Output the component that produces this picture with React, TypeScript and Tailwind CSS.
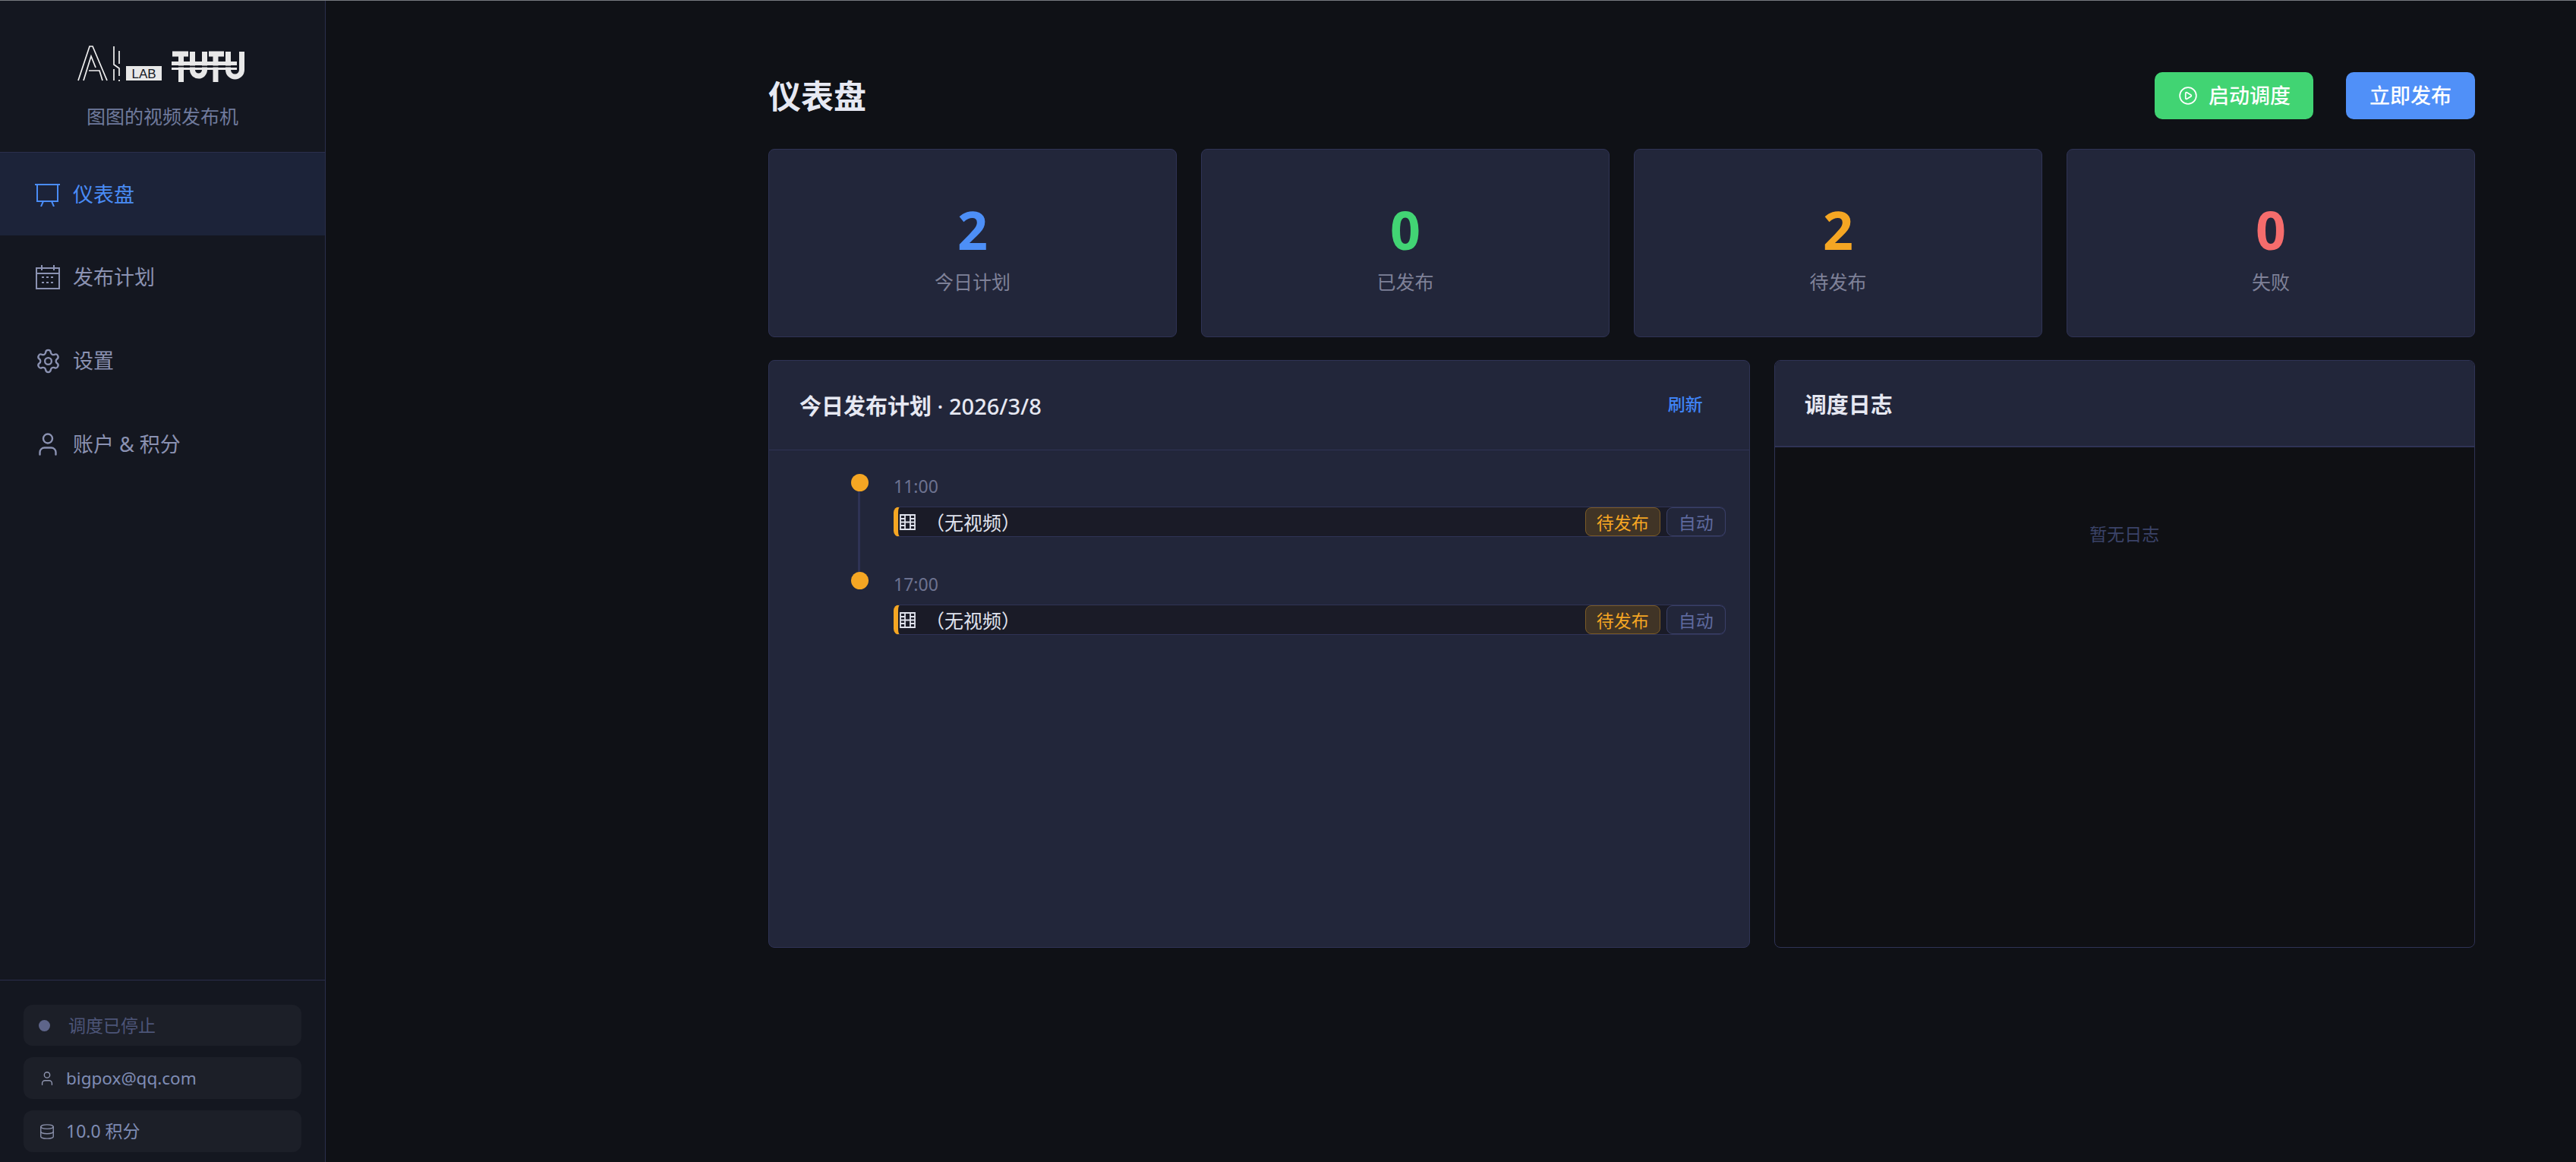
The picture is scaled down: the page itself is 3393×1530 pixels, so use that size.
import { CirclePlay, Database, Settings, User } from "lucide-react";

const fontStack = "font-['Noto_Sans','Noto_Sans_CJK_SC',sans-serif]";

const BoardIcon = () => (
  <svg width="33" height="30" viewBox="0 0 33 30" fill="none" stroke="currentColor" strokeWidth="2">
    <path d="M0 1h33M3 1v22h27V1M11 23l-3 7M22 23l3 7" />
  </svg>
);

const CalendarIcon = () => (
  <svg width="32" height="32" viewBox="0 0 32 32" fill="none" stroke="currentColor" strokeWidth="2">
    <path d="M1 4h30v27H1zM1 11h30M8 0v7M24 0v7" />
    <path d="M8 16h3M14 16h3M20 16h3M8 23h3M14 23h3M20 23h3" />
  </svg>
);

const FilmIcon = () => (
  <svg width="21" height="21" viewBox="0 0 21 21" fill="none" stroke="#dfe2ec" strokeWidth="1.8">
    <path d="M1 1h19v19H1zM7 1v19M14 1v19M7 10.500h7M1 6h6M1 10.500h6M1 15h6M14 6h6M14 10.500h6M14 15h6" />
  </svg>
);

const Logo = () => (
  <svg width="224" height="50" viewBox="102 58 224 50" fill="none" stroke="#f0f0f0">
    <g strokeWidth="1.700">
      <path d="M103 105l15-45h4l19 45" />
      <path d="M110 105l10-32 6 15" />
      <path d="M117 92h14l4 13" />
      <path d="M150 60v24l7 5v10M157 66v17M150 90v15M157 104v2" />
    </g>
    <rect x="166" y="86" width="47" height="19" fill="#e8e8e8" stroke="none" />
    <text x="189.500" y="101.500" textAnchor="middle" fontSize="17" fill="#14171f" stroke="none" fontFamily="Liberation Sans, sans-serif">
      LAB
    </text>
    <g strokeWidth="7" stroke="#e8e8e8">
      <path d="M227 70h21M238.500 70v37M253.500 67v24a8 8 0 0 0 16 0V67" />
      <path d="M275 70h20M284 70v37M300.500 67v24a9 9 0 0 0 18 0V67" />
    </g>
    <path d="M226 82.500h86" stroke="#e8e8e8" strokeWidth="5" />
    <path d="M225 86.500h90" stroke="#14171f" strokeWidth="2" />
    <path d="M226 89.500h86" stroke="#e8e8e8" strokeWidth="3" />
  </svg>
);

const navItems = [
  { label: "发布计划", icon: <CalendarIcon /> },
  { label: "设置", icon: <Settings size={35} strokeWidth={1.6} /> },
  { label: "账户 & 积分", icon: <User size={36} strokeWidth={1.6} /> },
];

const stats = [
  { value: "2", label: "今日计划", color: "text-[#4d8ff7]" },
  { value: "0", label: "已发布", color: "text-[#42d474]" },
  { value: "2", label: "待发布", color: "text-[#f5a623]" },
  { value: "0", label: "失败", color: "text-[#f56c6c]" },
];

const Sidebar = () => (
  <aside className="flex w-[429px] shrink-0 flex-col border-r border-[#2a2e4c] bg-[#141720]">
    <div className="flex h-[199px] flex-col items-center pt-[58px]">
      <Logo />
      <p className="mt-[27px] text-[25px] leading-[34px] text-[#6f7a9c]">图图的视频发布机</p>
    </div>
    <nav className="flex flex-col">
      <a className="flex h-[110px] items-center gap-[17px] border-t border-[#2a2e4c] bg-[#1c2339] pl-[46px] pt-[2px] text-[#4a8cf5]">
        <BoardIcon />
        <span className="text-[27px]">仪表盘</span>
      </a>
      {navItems.map((item) => (
        <a key={item.label} className="flex h-[110px] items-center text-[#8b92b2]">
          <span className="flex w-[96px] justify-center pl-[30px]">{item.icon}</span>
          <span className="text-[27px]">{item.label}</span>
        </a>
      ))}
    </nav>
    <div className="mt-auto flex flex-col gap-[15px] border-t border-[#2a2e4c] px-[31px] pb-[13px] pt-[32px]">
      <div className="flex h-[54px] items-center rounded-xl bg-[#1c1f28] pl-[20px] text-[#4d5578]">
        <span className="h-[15px] w-[15px] rounded-full bg-[#5e658a]" />
        <span className="ml-[24px] text-[23px]">调度已停止</span>
      </div>
      <div className="flex h-[55px] items-center gap-[14px] rounded-xl bg-[#1c1f28] pl-[20px] text-[#7f8cb4]">
        <User size={22} strokeWidth={1.5} className="text-[#9096b0]" />
        <span className="text-[22.500px]">bigpox@qq.com</span>
      </div>
      <div className="flex h-[55px] items-center gap-[14px] rounded-xl bg-[#1c1f28] pl-[20px] text-[#7f8cb4]">
        <Database size={22} strokeWidth={1.5} className="text-[#8a90aa]" />
        <span className="text-[23px]">10.0 积分</span>
      </div>
    </div>
  </aside>
);

const PlanRow = ({ time, last }: { time: string; last?: boolean }) => (
  <div className="flex h-[129px]">
    <div className="flex w-[23px] flex-col items-center">
      <span className="h-[23px] w-[23px] shrink-0 rounded-full bg-[#f5a623]" />
      {!last && <span className="w-[3px] flex-1 -translate-x-px bg-[#2f3355]" />}
    </div>
    <div className="ml-[33px] flex-1">
      <p className="h-[32px] text-[23px] leading-[32px] text-[#6d7290]">{time}</p>
      <div className="mt-[11px] flex h-[40px] items-stretch rounded-lg border border-l-[6px] border-[#2f3355] border-l-[#f5a623] bg-[#1a1b27]">
        <span className="flex items-center pl-[2px]">
          <FilmIcon />
        </span>
        <span className="ml-[13px] flex items-center pt-[3px] text-[25px] text-[#e0e3ee]">（无视频）</span>
        <span className="ml-auto flex items-center rounded-lg border border-[#7b5b26] bg-[#403426] px-[14px] pt-[3px] text-[23px] text-[#f5a623]">
          待发布
        </span>
        <span className="ml-[8px] -mr-px flex items-center rounded-lg border border-[#3a4068] bg-[#22263a] px-[15px] pt-[3px] text-[23px] text-[#5f6a9e]">
          自动
        </span>
      </div>
    </div>
  </div>
);

const App = () => {
  return (
    <div className={`flex h-[1530px] w-[3393px] overflow-hidden border-t border-[#777a80] bg-[#0f1116] ${fontStack}`}>
      <Sidebar />
      <main className="flex-1 pl-[583px] pr-[133px] pt-[94px]">
        <div className="flex h-[62px] items-center justify-between">
          <h1 className="pt-[2px] text-[43px] font-bold leading-[56px] text-[#e6e8f2]">仪表盘</h1>
          <div className="flex gap-[43px]">
            <button className="flex h-[62px] items-center gap-[14px] rounded-[10px] bg-[#41d473] pl-[31px] pr-[30px] text-[27px] font-medium text-white">
              <CirclePlay size={26} strokeWidth={1.6} />
              启动调度
            </button>
            <button className="flex h-[62px] items-center rounded-[10px] bg-[#5090f8] px-[31px] text-[27px] font-medium text-white">
              立即发布
            </button>
          </div>
        </div>

        <div className="mt-[39px] grid grid-cols-4 gap-[32px]">
          {stats.map((stat) => (
            <div
              key={stat.label}
              className="flex h-[248px] flex-col items-center justify-center rounded-lg border border-[#2f3355] bg-[#22263a] pt-[10px]"
            >
              <span className={`text-[70px] font-bold leading-[80px] ${stat.color}`}>{stat.value}</span>
              <span className="mt-[12px] text-[25px] leading-[34px] text-[#7f8198]">{stat.label}</span>
            </div>
          ))}
        </div>

        <div className="mt-[30px] grid h-[774px] grid-cols-[1.4fr_1fr] gap-[32px]">
          <section className="rounded-lg border border-[#2f3355] bg-[#22263a]">
            <header className="flex h-[118px] items-center justify-between border-b border-[#2f3355] pl-[40px] pr-[61px]">
              <h2 className="pt-[2px] text-[29px] font-bold text-[#e6e8f2]">
                今日发布计划 <span className="font-medium">· 2026/3/8</span>
              </h2>
              <button className="-translate-y-px text-[23px] font-medium text-[#3f83f5]">刷新</button>
            </header>
            <div className="pl-[108px] pr-[31px] pt-[31px]">
              <PlanRow time="11:00" />
              <PlanRow time="17:00" last />
            </div>
          </section>
          <section className="flex flex-col overflow-hidden rounded-lg border border-[#2f3355] bg-[#0f1014]">
            <header className="flex h-[114px] items-center border-b-2 border-[#2f3355] bg-[#22263a] pl-[39px] pt-[4px]">
              <h2 className="text-[29px] font-bold text-[#e6e8f2]">调度日志</h2>
            </header>
            <p className="pt-[98px] text-center text-[23px] leading-[32px] text-[#3b4368]">暂无日志</p>
          </section>
        </div>
      </main>
    </div>
  );
};

export default App;
